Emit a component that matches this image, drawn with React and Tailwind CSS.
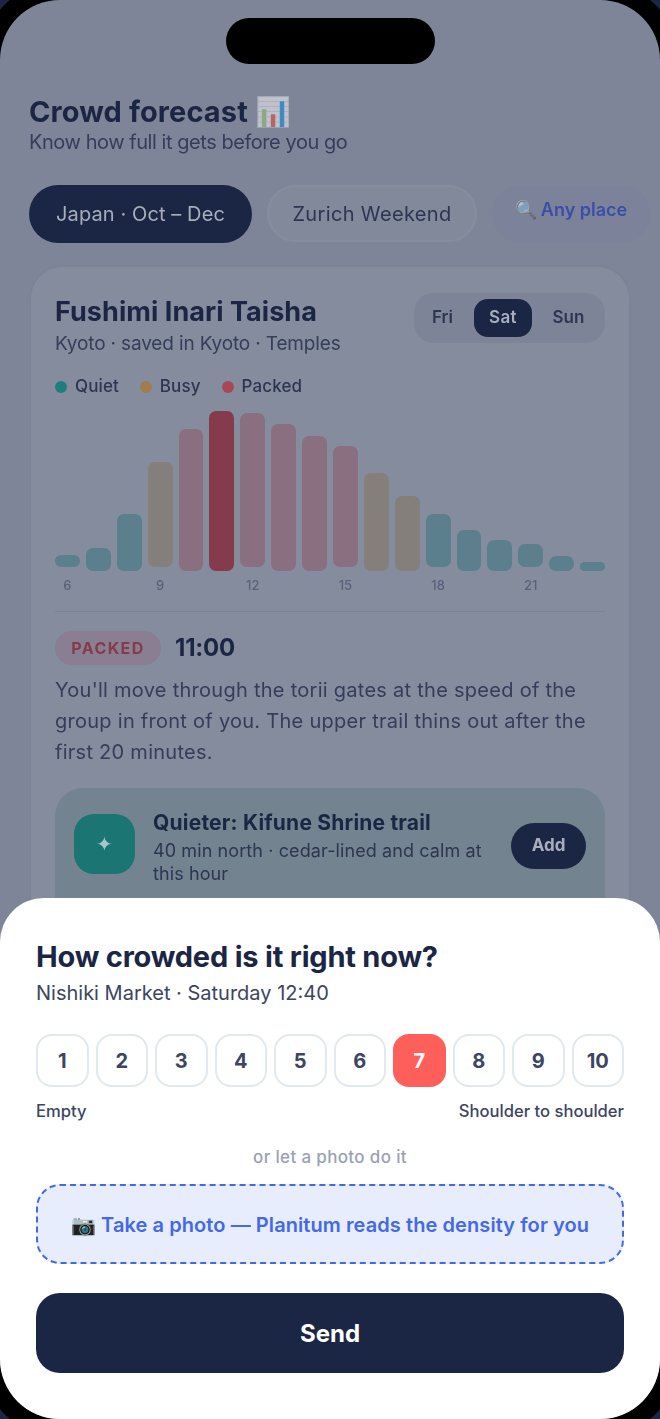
const sans = "font-['Inter',sans-serif]";

const bars = [
  { h: 12, t: "q", mark: true, label: "6" },
  { h: 23, t: "q" },
  { h: 57, t: "q" },
  { h: 105, t: "b", mark: true, label: "9" },
  { h: 142, t: "p" },
  { h: 160, t: "now" },
  { h: 154, t: "p", mark: true, label: "12" },
  { h: 147, t: "p" },
  { h: 135, t: "p" },
  { h: 121, t: "p", mark: true, label: "15" },
  { h: 98, t: "b" },
  { h: 75, t: "b" },
  { h: 53, t: "q", mark: true, label: "18" },
  { h: 41, t: "q" },
  { h: 31, t: "q" },
  { h: 23, t: "q", mark: true, label: "21" },
  { h: 15, t: "q" },
  { h: 9, t: "q" },
];

const barColor = {
  q: "bg-[#5b7f8c]",
  b: "bg-[#857f7c]",
  p: "bg-[#8a6f80]",
  now: "bg-[#853b4c]",
};

const App = () => {
  return (
    <div className={`relative w-[660px] h-[1419px] overflow-hidden bg-[#1b2544] ${sans}`}>
      <div className="absolute -inset-[10px] rounded-[50px] bg-black" />
      <div className="relative h-full rounded-[60px] overflow-hidden bg-[#7f8598]">
        <div className="blur-[0.4px]">
          <div className="absolute top-[18px] left-[226px] w-[209px] h-[46px] rounded-full bg-black" />

          <div className="pt-[95px] px-[29px]">
            <h1 className="text-[29px] leading-[34px] font-bold text-[#1b2544] tracking-[0.1px]">
              Crowd forecast <span className="opacity-50">📊</span>
            </h1>
            <p className="text-[20px] leading-[26px] text-[#353d5b] tracking-[-0.45px]">Know how full it gets before you go</p>
          </div>

          <div className="flex gap-[15px] pl-[29px] mt-[30px] items-start">
            <div className="h-[58px] w-[223px] rounded-full bg-[#1b2544] text-[#a8aebd] text-[20px] tracking-[0.1px] flex items-center justify-center">Japan · Oct – Dec</div>
            <div className="h-[57px] w-[210px] rounded-full bg-[#82899b] border-2 border-[#878d9f] text-[#2d3553] text-[20px] tracking-[0.35px] flex items-center justify-center">Zurich Weekend</div>
            <div className="h-[58px] w-[158px] rounded-full bg-[#7c8299] text-[#3a4ea8] text-[18px] font-semibold flex items-center justify-center pb-[10px]">
              <span className="opacity-60 mr-[4px]">🔍</span>Any place
            </div>
          </div>

          <div className="mx-[29px] mt-[22px] rounded-t-[34px] h-[680px] bg-[#858c9d] border-2 border-[#7c8397] px-[24px] pt-[27px]">
            <div className="flex justify-between items-start">
              <div>
                <h2 className="text-[27px] leading-[36px] font-bold text-[#1b2544] tracking-[0.05px]">Fushimi Inari Taisha</h2>
                <p className="text-[19px] leading-[28px] text-[#353d5b] tracking-[-0.15px]">Kyoto · saved in Kyoto · Temples</p>
              </div>
              <div className="flex items-center h-[50px] w-[191px] -mt-[1px] rounded-[20px] bg-[#7d8498] text-[17px] font-semibold text-[#2d3553]">
                <span className="w-[60px] pr-[3px] text-center">Fri</span>
                <span className="w-[58px] h-[38px] rounded-[14px] bg-[#1b2544] text-[#a8aebd] tracking-[0.4px] flex items-center justify-center">Sat</span>
                <span className="flex-1 text-center">Sun</span>
              </div>
            </div>

            <div className="flex items-center gap-[21px] mt-[16px] text-[17px] font-medium text-[#2d3553] tracking-[0.1px]">
              <span className="flex items-center gap-[8px]"><i className="w-3 h-3 rounded-full bg-[#1c7f7e]" />Quiet</span>
              <span className="flex items-center gap-[8px]"><i className="w-3 h-3 rounded-full bg-[#a07d4c]" />Busy</span>
              <span className="flex items-center gap-[8px]"><i className="w-3 h-3 rounded-full bg-[#a84856]" />Packed</span>
            </div>

            <div className="flex items-end gap-[6px] h-[160px] mt-[11px]">
              {bars.map((b, i) => (
                <div
                  key={i}
                  className={`flex-1 rounded-[7px] ${barColor[b.t]} ${b.mark ? "mb-[4px]" : ""}`}
                  style={{ height: b.h }}
                />
              ))}
            </div>
            <div className="grid grid-cols-[repeat(18,1fr)] gap-[6px] mt-[6px] h-[17px] text-[13px] leading-[17px] font-medium text-[#5a617c] text-center">
              {bars.map((b, i) => (
                <span key={i} className="whitespace-nowrap">{b.label}</span>
              ))}
            </div>

            <div className="border-t border-[#7c8396] mt-[17px] pt-[18px] flex items-center gap-[14px]">
              <span className="h-[34px] w-[106px] rounded-full bg-[#8a7f92] text-[#853b4c] text-[16px] font-bold tracking-[1.4px] flex items-center justify-center">PACKED</span>
              <span className="text-[24px] font-bold text-[#1b2544] tracking-[-0.2px]">11:00</span>
            </div>
            <p className="mt-[9px] text-[20px] leading-[31px] text-[#353d5b] tracking-[0.27px]">
              You'll move through the torii gates at the speed of the group in front of you. The upper trail thins out after the first 20 minutes.
            </p>

            <div className="mt-[20px] rounded-[28px] bg-[#738390] h-[150px] px-[19px] pt-[26px] flex items-start">
              <div className="w-[61px] h-[60px] rounded-[20px] bg-[#1b7573] text-[#a8c5c8] text-[20px] flex items-center justify-center shrink-0">✦</div>
              <div className="ml-[18px] flex-1 -mt-[4px]">
                <p className="text-[21px] leading-[26px] font-bold text-[#1b2544] tracking-[0.2px]">Quieter: Kifune Shrine trail</p>
                <p className="mt-[3px] text-[18px] leading-[23px] text-[#2d3553] tracking-[0.1px] w-[340px]">40 min north · cedar-lined and calm at this hour</p>
              </div>
              <div className="w-[75px] h-[46px] rounded-full bg-[#1b2544] text-[#a8aebd] text-[17px] font-bold flex items-center justify-center shrink-0 mt-[9px]">Add</div>
            </div>
          </div>
        </div>

        <div className="absolute left-0 right-0 top-[898px] bottom-0 rounded-t-[44px] bg-white px-[36px] pt-[42px]">
          <h3 className="text-[29px] leading-[34px] font-bold text-[#1b2544] tracking-[-0.2px]">How crowded is it right now?</h3>
          <p className="mt-[6px] text-[20px] leading-[26px] text-[#3c4561]">Nishiki Market · Saturday 12:40</p>

          <div className="mt-[28px] grid grid-cols-10 gap-[7px]">
            {[1, 2, 3, 4, 5, 6, 7, 8, 9, 10].map((n) => (
              <div
                key={n}
                className={`h-[53px] rounded-[16px] flex items-center justify-center text-[20px] font-bold ${
                  n === 7 ? "bg-[#ff5f5b] text-white" : "border-2 border-[#e2e8f0] text-[#3c4561]"
                }`}
              >
                {n}
              </div>
            ))}
          </div>
          <div className="mt-[13px] flex justify-between text-[16.6px] leading-[22px] font-medium text-[#3c4561]">
            <span>Empty</span>
            <span>Shoulder to shoulder</span>
          </div>

          <p className="mt-[24px] text-center text-[17px] leading-[22px] font-medium text-[#9aa1b3] tracking-[0.35px]">or let a photo do it</p>

          <div className="mt-[16px] h-[80px] rounded-[24px] border-2 border-dashed border-[#4369e6] bg-[#e8edfd] text-[#4369e6] text-[20px] tracking-[0.08px] font-semibold flex items-center justify-center pt-[2px]">
            📷 Take a photo — Planitum reads the density for you
          </div>

          <div className="mt-[29px] h-[80px] rounded-[24px] bg-[#1b2544] text-white text-[24px] font-bold flex items-center justify-center pt-[2px]">Send</div>
        </div>
      </div>
    </div>
  );
};

export default App;
